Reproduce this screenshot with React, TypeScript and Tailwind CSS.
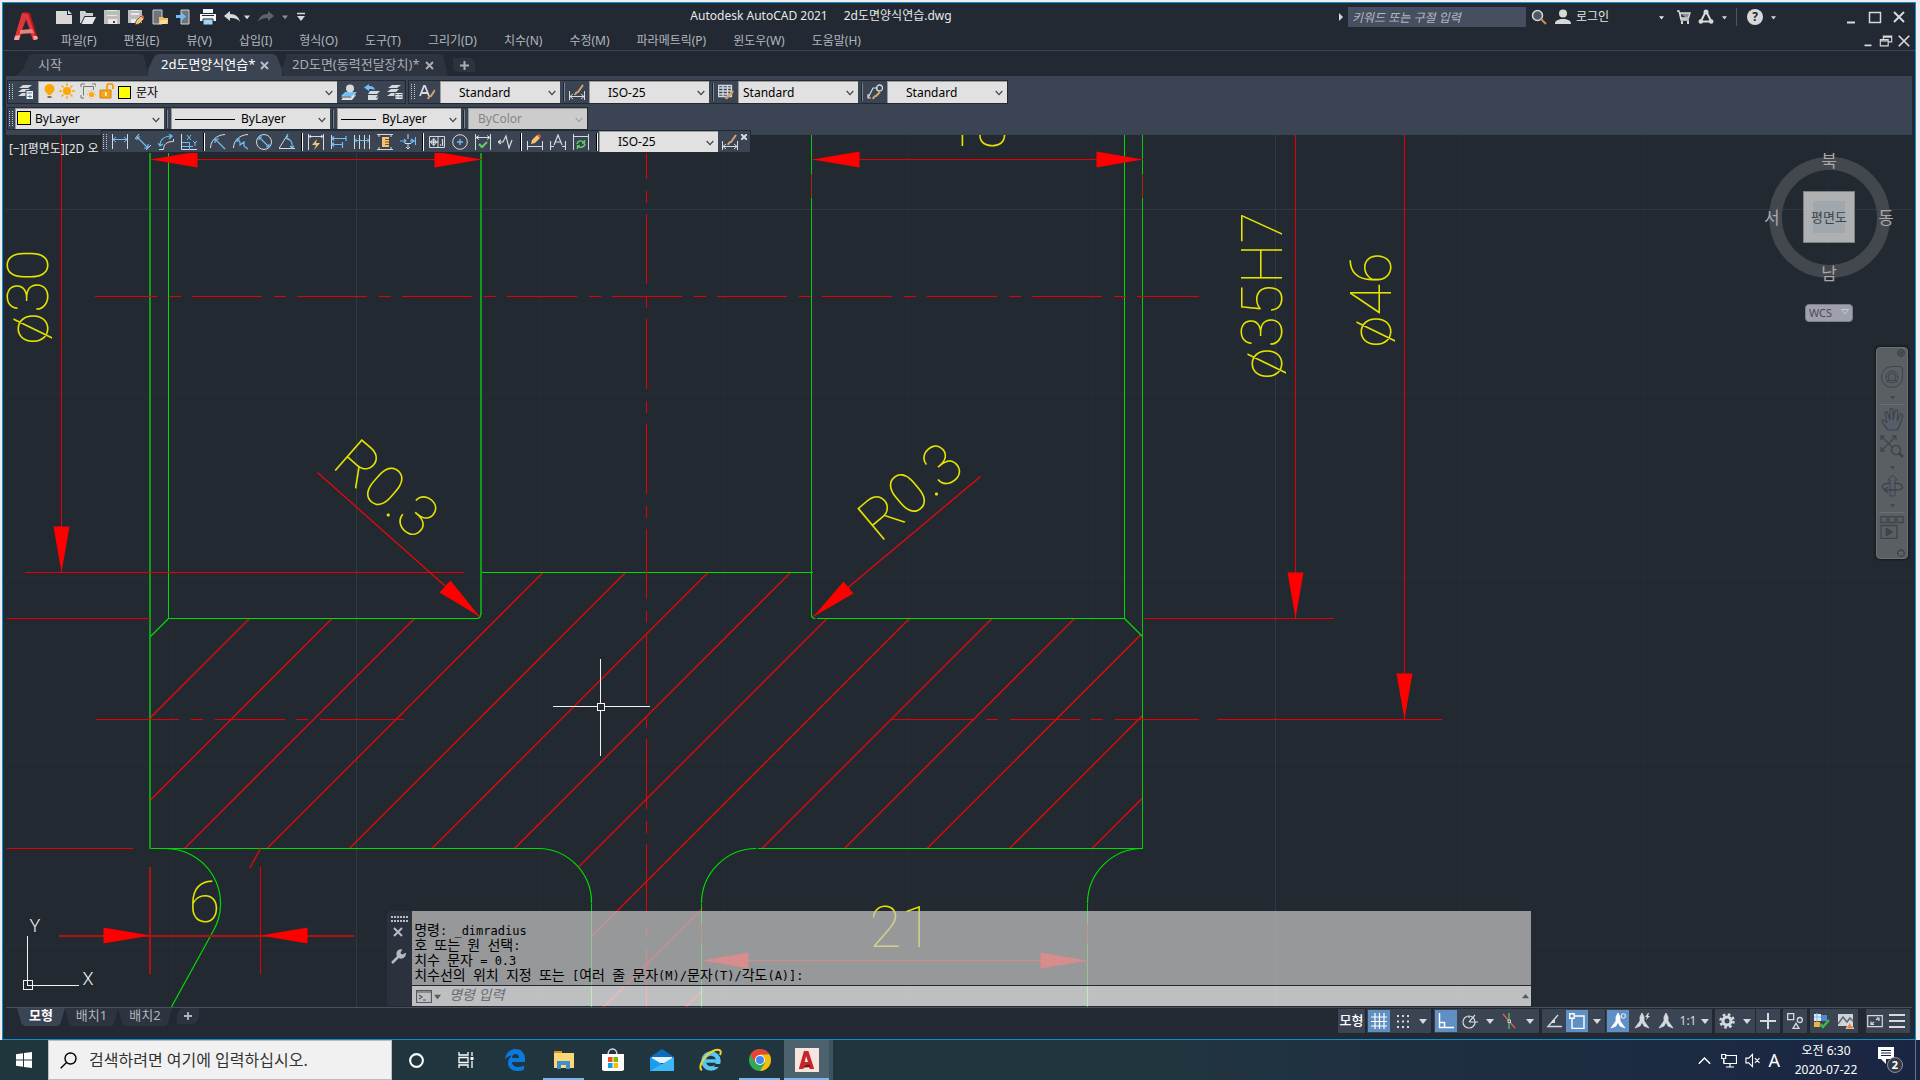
import type { ReactNode } from "react";

type IconProps = { children: ReactNode; className?: string; box?: string };

function Icon({ children, className = "size-4", box = "0 0 16 16" }: IconProps) {
  return (
    <svg viewBox={box} className={`${className} shrink-0`} fill="none" stroke="currentColor" aria-hidden="true">
      {children}
    </svg>
  );
}

const BLUE = "#6cc0f5";
const PALE = "#d6d9de";

/* ---------- shared small parts ---------- */

function Caret({ className = "size-2" }: { className?: string }) {
  return (
    <Icon className={className} box="0 0 8 8">
      <path d="M0 2h8L4 7z" fill="currentColor" stroke="none" />
    </Icon>
  );
}

function Grip() {
  return (
    <Icon className="h-4 w-1" box="0 0 4 16">
      <path d="M.5 0v16M3.5 0v16" stroke="#c5cad3" strokeDasharray="1 1" />
    </Icon>
  );
}

function Rule() {
  return <span className="h-[18px] w-[2px] shrink-0 border-l border-[#20262f] bg-[#7b8493]" />;
}

function HardRule() {
  return <span className="h-[18px] w-[2px] shrink-0 border-l border-black bg-white" />;
}

function Tool({ label, children }: { label: string; children: ReactNode }) {
  return (
    <button type="button" aria-label={label} title={label} className="shrink-0">
      <Icon>{children}</Icon>
    </button>
  );
}

type ComboProps = { label: string; value: string; width: string; pad: string; off?: boolean; children?: ReactNode };

function Combo({ label, value, width, pad, off = false, children }: ComboProps) {
  return (
    <div className={`relative h-full shrink-0 ${width}`}>
      <select
        aria-label={label}
        disabled={off}
        className={`block h-full w-full appearance-none border-l border-t border-[#9b9b9b] text-xs opacity-100 ${pad} ${
          off ? "bg-[#cccccc] text-[#858585]" : "bg-[#e1e1e1] text-black"
        }`}
      >
        <option>{value}</option>
      </select>
      {children}
      <Icon className={`absolute right-1 top-2 size-2 ${off ? "text-[#a5a5a5]" : "text-[#444]"}`} box="0 0 8 8">
        <path d="M.7 2 4 5.6 7.3 2" strokeWidth="1.2" />
      </Icon>
    </div>
  );
}

/* ---------- title and menu ---------- */

function QuickAccess() {
  return (
    <div className="flex items-center gap-2 pl-[18px] text-[#d8d8d8]">
      <Tool label="새로 만들기">
        <path d="M0 2h10l1 0v4h5v9H0z M12 1l4 4h-4z" fill="#d8d8d8" stroke="none" />
      </Tool>
      <Tool label="열기">
        <path d="M0 14V2h5l1.5 2H13v3H4.500L1 14z" fill="#cfcfcf" stroke="none" />
        <path d="M5 8h11l-3.500 7H1.500z" fill="#e6e6e6" stroke="none" />
      </Tool>
      <Tool label="저장">
        <path d="M0 1h16v14H0z" fill="#bdbdbd" stroke="none" />
        <path d="M3 1h10v6H3zM4 10h9v5H4z" fill="#e8e8e8" stroke="none" />
        <path d="M3 3h10M3 5h10" stroke="#8d8d8d" />
        <path d="M9 12h2v2H9z" fill="#444" stroke="none" />
      </Tool>
      <Tool label="다른 이름으로 저장">
        <path d="M0 1h14v13H0z" fill="#bdbdbd" stroke="none" />
        <path d="M3 1h8v5H3zM3 10h5v4H3z" fill="#e8e8e8" stroke="none" />
        <path d="M3 3h8" stroke="#8d8d8d" />
        <path d="M8 12l5-5 3 3-5 5-4 1z" fill="#f5c56b" stroke="#222933" strokeWidth=".6" />
        <path d="M13 7l1.500-1L16 8v2z" fill="#e46a5e" stroke="none" />
      </Tool>
      <Tool label="웹 및 모바일에서 열기">
        <path d="M1 1h9v14H1z" fill="#6f747c" stroke="#cfcfcf" />
        <path d="M7 8h4l1 1h4v6H7z" fill="#f0c067" stroke="none" />
        <path d="M9 11h7l-2 4H7z" fill="#ffdf9a" stroke="none" />
      </Tool>
      <Tool label="웹 및 모바일에 저장">
        <path d="M5 1h8v14H5z" fill="#6f747c" stroke="#cfcfcf" />
        <path d="M0 6h5V3l5 4.500L5 12V9H0z" fill={BLUE} stroke="none" />
      </Tool>
      <Tool label="플롯">
        <path d="M3 0h10v4H3zM0 5h16v7H0z" fill="#f4f4f4" stroke="none" />
        <path d="M3 10h10v6H3z" fill="#9ed3fa" stroke="#222933" />
        <path d="M2 6.500h12" stroke="#222933" />
      </Tool>
      <Tool label="명령 취소">
        <path d="M0 7l6-5v3c6 0 9 3 10 8-2-3-5-4-10-4v3z" fill="#d8d8d8" stroke="none" />
      </Tool>
      <Caret className="-ml-1 size-[6px]" />
      <span className="flex text-[#5d636c]">
        <Icon>
          <path d="M16 7l-6-5v3C4 5 1 8 0 13c2-3 5-4 10-4v3z" fill="currentColor" stroke="none" />
        </Icon>
      </span>
      <Caret className="size-[6px] text-[#8b9098]" />
      <Icon className="size-[10px]" box="0 0 10 10">
        <path d="M1 1.500h8" strokeWidth="1.500" />
        <path d="M1 4h8L5 9z" fill="currentColor" stroke="none" />
      </Icon>
    </div>
  );
}

function AutodeskLogo({ className }: { className: string }) {
  return (
    <Icon className={className} box="0 0 24 28">
      <path d="M0 28 8 1l3-1 5 1 8 26-5 1-3-7H8l-3 7z" fill="#b3191e" stroke="none" />
      <path d="M8 1l6 1 9 26h-4L12 7 5 28H0z" fill="#e0353a" stroke="none" />
      <path d="M12 8l4 10H8z" fill="#222933" stroke="none" />
      <path d="M6 18l12-1 2 4-14 1z" fill="#e8807c" stroke="none" />
      <path d="M1 24l5-1-1 5H0zM19 24l4 0 1 3-4 1z" fill="#f0a8a2" stroke="none" />
    </Icon>
  );
}

const MENUS = [
  "파일(F)", "편집(E)", "뷰(V)", "삽입(I)", "형식(O)", "도구(T)", "그리기(D)",
  "치수(N)", "수정(M)", "파라메트릭(P)", "윈도우(W)", "도움말(H)",
];

function Header() {
  return (
    <header className="relative flex h-12 shrink-0 border-b border-[#3d4655]">
      <button type="button" aria-label="응용프로그램 메뉴" className="ml-[11px] mt-[9px] self-start">
        <AutodeskLogo className="h-7 w-6" />
      </button>
      <div className="flex min-w-0 flex-1 flex-col">
        <div className="flex h-7 items-center">
          <QuickAccess />
          <div className="ml-auto flex items-center pr-2 text-[#d8d8d8]">
            <Icon className="size-2" box="0 0 8 8">
              <path d="M3 0v8l4-4z" fill="currentColor" stroke="none" />
            </Icon>
            <input
              aria-label="검색"
              placeholder="키워드 또는 구절 입력"
              className="ml-1 h-5 w-[178px] bg-[#464f60] px-1 text-xs italic placeholder:text-[#b4bac4]"
            />
            <button type="button" aria-label="찾기" className="ml-[5px]">
              <Icon>
                <circle cx="6.500" cy="6.500" r="5" fill="#4d5b66" strokeWidth="1.500" />
                <path d="M10 10l5 5" stroke="#c98e55" strokeWidth="2" />
              </Icon>
            </button>
            <button type="button" className="ml-2 flex items-center gap-[5px] text-xs text-[#e6e6e6]">
              <Icon>
                <circle cx="8" cy="4.500" r="4" fill="#d8d8d8" stroke="none" />
                <path d="M0 15c0-4 3-4 6-5h4c3 1 6 1 6 5z" fill="#d8d8d8" stroke="none" />
              </Icon>
              <span className="w-[78px] text-left">로그인</span>
              <Caret className="size-[5px]" />
            </button>
            <button type="button" aria-label="앱 스토어" className="ml-3">
              <Icon>
                <path d="M1 2h2l2 9h8M4 4h10l-1.500 5H5z" strokeWidth="1.300" fill="#8b9098" />
                <path d="M5 12h2v3H5zM11 12h2v3h-2z" fill="currentColor" stroke="none" />
              </Icon>
            </button>
            <button type="button" aria-label="Autodesk" className="ml-[6px] flex items-center gap-2">
              <Icon>
                <path d="M7.500 3 2.500 13M8.500 3l5 10M2 12.500h12" strokeWidth="2" />
                <circle cx="8" cy="3" r="2.500" fill="currentColor" stroke="none" />
                <circle cx="2.800" cy="12.500" r="2.300" fill="currentColor" stroke="none" />
                <circle cx="13.200" cy="12.500" r="2.300" fill="currentColor" stroke="none" />
              </Icon>
              <Caret className="size-[5px]" />
            </button>
            <span className="ml-[9px] h-[18px] w-px bg-[#4c5667]" />
            <button type="button" aria-label="도움말" className="ml-[10px] flex items-center gap-2">
              <span className="flex size-4 items-center justify-center rounded-full bg-[#d8d8d8] text-xs font-bold text-[#222933]">?</span>
              <Caret className="size-[5px]" />
            </button>
            <button type="button" aria-label="최소화" className="ml-[67px]">
              <Icon><path d="M4 13.500h8" strokeWidth="2" /></Icon>
            </button>
            <button type="button" aria-label="최대화" className="ml-2">
              <Icon><path d="M2.500 3.500h11v10h-11z" strokeWidth="1.500" /></Icon>
            </button>
            <button type="button" aria-label="닫기" className="ml-2">
              <Icon><path d="M3 3l10 10M13 3 3 13" strokeWidth="2" /></Icon>
            </button>
          </div>
        </div>
        <div className="flex h-[19px] items-center">
          <nav className="flex gap-[27px] pl-[23px] text-xs text-[#b2b6bd]">
            {MENUS.map((m) => (
              <button key={m} type="button" className="whitespace-nowrap">{m}</button>
            ))}
          </nav>
          <div className="ml-auto flex items-center gap-1 pr-1 text-[#d8d8d8]">
            <button type="button" aria-label="도면 최소화">
              <Icon className="size-[14px]"><path d="M4 13h8" strokeWidth="2" /></Icon>
            </button>
            <button type="button" aria-label="도면 복원">
              <Icon className="size-[14px]">
                <path d="M5 6V2.500h9.500V9H11M1.500 6.500h9v7h-9zM5 3.500h9M2 8h8" strokeWidth="1.300" />
              </Icon>
            </button>
            <button type="button" aria-label="도면 닫기">
              <Icon className="size-[14px]"><path d="M2 2l12 12M14 2 2 14" strokeWidth="2" /></Icon>
            </button>
          </div>
        </div>
      </div>
      <h1 className="pointer-events-none absolute inset-x-0 top-1 flex justify-center gap-4 pr-[276px] text-xs leading-[18px] text-[#e8e8e8]">
        <span>Autodesk AutoCAD 2021</span>
        <span>2d도면양식연습.dwg</span>
      </h1>
    </header>
  );
}

function FileTabs() {
  return (
    <div className="flex h-[25px] shrink-0 items-end bg-[#222933] pl-[10px] text-[13px] text-[#a9aeb6]">
      <button type="button" className="h-[22px] w-[132px] bg-[#2d3440] pl-[22px] text-left [clip-path:polygon(0_100%,5%_70%,10%_8%,13%_0,94%_0,97%_8%,100%_100%)]">
        시작
      </button>
      <div className="flex h-[22px] w-[134px] items-center justify-between bg-[#3b4453] pl-[13px] pr-[13px] text-white [clip-path:polygon(0_70%,5%_8%,8%_0,93%_0,96%_8%,100%_70%,100%_100%,0_100%)]">
        <button type="button" className="whitespace-nowrap">2d도면양식연습*</button>
        <button type="button" aria-label="2d도면양식연습 닫기" className="text-[#b9bdc4]">
          <Icon className="size-[9px]" box="0 0 9 9"><path d="M1 1l7 7M8 1 1 8" strokeWidth="2" /></Icon>
        </button>
      </div>
      <div className="flex h-[22px] w-[166px] items-center justify-between bg-[#2d3440] pl-[10px] pr-[14px] [clip-path:polygon(0_70%,3%_0,94%_0,97%_8%,100%_100%,1%_100%)]">
        <button type="button" className="whitespace-nowrap">2D도면(동력전달장치)*</button>
        <button type="button" aria-label="2D도면 닫기">
          <Icon className="size-[9px]" box="0 0 9 9"><path d="M1 1l7 7M8 1 1 8" strokeWidth="2" /></Icon>
        </button>
      </div>
      <button type="button" aria-label="새 도면" className="mb-1 ml-[5px] flex h-[14px] w-[22px] items-center justify-center rounded-bl-md rounded-tr-md bg-[#2d3440]">
        <Icon className="size-[9px]" box="0 0 9 9"><path d="M4.500 0v9M0 4.500h9" strokeWidth="2" /></Icon>
      </button>
    </div>
  );
}

/* ---------- toolbars ---------- */

function Layers() {
  return (
    <g stroke="none" fill={PALE}>
      <path d="M5 1h9l-4 3H1zM4 5h8l-3 3H0zM4 9h6l-3 3H0z" />
    </g>
  );
}

function StyleBars() {
  return (
    <div className="flex shrink-0 flex-col gap-[3px] bg-[#3b4453] pb-[5px] pl-px pt-1 text-[#d6d9de]">
      <div className="flex h-6 gap-[2px]">
        <div className="flex items-center border border-[#222933] pl-px">
          <Grip />
          <span className="ml-[5px] mr-1 flex">
            <Tool label="도면층 특성">
              <Layers />
              <path d="M8 6.500h7.500v9H8z" fill="#f2f2f2" stroke="#3b4453" />
              <path d="M9.500 9h4.500M9.500 12.500h4.500M12 11v3" stroke="#3f87c0" />
            </Tool>
          </span>
          <Combo label="도면층" value="문자" width="w-[299px]" pad="pl-[97px]">
            <span className="pointer-events-none absolute left-1 top-[2px] flex gap-px">
              <Icon>
                <circle cx="7.500" cy="6" r="5" fill="#ffa600" stroke="none" />
                <path d="M5.500 10h4v2h-4z" fill="#ffa600" stroke="none" />
                <path d="M5.500 13h4v2h-4z" fill="#777" stroke="none" />
              </Icon>
              <Icon>
                <circle cx="8" cy="8" r="4" fill="#ffa600" stroke="none" />
                <path d="M8 0v3M8 13v3M0 8h3M13 8h3M2.500 2.500l2 2M11.500 11.500l2 2M13.500 2.500l-2 2M4.500 11.500l-2 2" stroke="#ffa600" strokeWidth="1.300" />
              </Icon>
              <Icon className="ml-1 size-4">
                <path d="M3.500 12.500v-9h10V7M1 4V1h4M12 1h4v3M1 12v3h3" stroke="#777" />
                <circle cx="11.500" cy="11.500" r="2.500" fill="#ffa600" stroke="none" />
                <path d="M11.500 7v9M7 11.500h9M8.500 8.500l6 6M14.500 8.500l-6 6" stroke="#ffa600" strokeDasharray="1 1" />
              </Icon>
              <Icon className="ml-[2px] size-4">
                <path d="M1 7h11v8H1z" fill="#f6a21a" stroke="#d88400" />
                <path d="M8 7V3c0-3 6-3 6 0v3" stroke="#f6a21a" strokeWidth="2" />
                <path d="M6 9h1.500v4H6z" fill="#fff" stroke="none" />
              </Icon>
              <span className="ml-[2px] mt-[3px] size-[13px] border border-black bg-[#ffff00]" />
            </span>
          </Combo>
          <span className="ml-1 flex gap-[7px] pr-[2px]">
            <Tool label="객체의 도면층을 현재로">
              <path d="M4 8h12l-4 4H0z" fill={BLUE} stroke="none" />
              <path d="M3 10.500h1l-3 2h9l4-3h1l-4 4H0zM3 13h1l-3 1h9l4-3h1l-4 5H0z" fill="#e2e2e2" stroke="none" />
              <circle cx="9" cy="4.500" r="4" fill="#d5d8dc" stroke="none" />
            </Tool>
            <Tool label="이전 도면층">
              <path d="M6 7h10l-3 3H4zM4 11h10l1-2-3 5H4zM4 14h9l2-2-2 4H4z" fill={PALE} stroke="none" />
              <path d="M0 3.500 5 0v2c4 0 5 1 6 4-2-1-3-1-6-1v2z" fill={BLUE} stroke="none" />
            </Tool>
            <Tool label="도면층 상태">
              <Layers />
              <path d="M8 8.500h8v7H8z" fill="#eee" stroke="#3b4453" />
              <path d="M9 10.500h1.500M11.500 10.500H15M9 13h1.500M11.500 13H15" stroke="#555" />
            </Tool>
          </span>
        </div>
        <div className="flex items-center border border-[#222933] pl-[2px]">
          <Grip />
          <span className="ml-1 mr-[5px] flex">
            <Tool label="문자 스타일">
              <path d="M1 12 5 2h1l4 10M2.500 9h6" strokeWidth="1.800" />
              <path d="M9 15c1-3 3-3 3-3l4-6" stroke="#d2a470" strokeWidth="2" />
            </Tool>
          </span>
          <Combo label="문자 스타일 목록" value="Standard" width="w-[120px]" pad="pl-[18px]" />
          <span className="ml-[3px] mr-1 flex"><Rule /></span>
          <span className="mr-1 flex">
            <Tool label="치수 스타일">
              <path d="M.5 7v9M15.500 7v9M1 12.500h14M4 10l-3 2.500L4 15M12 10l3 2.500-3 2.500" />
              <path d="M6 11c1-3 3-3 3-3l5-7" stroke="#d2a470" strokeWidth="2" />
            </Tool>
          </span>
          <Combo label="치수 스타일 목록" value="ISO-25" width="w-[120px]" pad="pl-[18px]" />
          <span className="ml-[3px] mr-1 flex"><Rule /></span>
          <span className="mr-1 flex">
            <Tool label="테이블 스타일">
              <path d="M.5 1.500h13v11H.5zM.5 4h13M.5 7h13M.5 10h13M5 2v10M9.500 2v10" strokeWidth="1.300" />
              <path d="M8 15c1-3 3-3 3-3l4-5" stroke="#d2a470" strokeWidth="2.500" />
            </Tool>
          </span>
          <Combo label="테이블 스타일 목록" value="Standard" width="w-[120px]" pad="pl-1" />
          <span className="ml-[3px] mr-1 flex"><Rule /></span>
          <span className="mr-1 flex">
            <Tool label="다중 지시선 스타일">
              <path d="M1 14 6 4h5M1 10v4h3" strokeWidth="1.200" />
              <circle cx="12.500" cy="4" r="3" strokeWidth="1.300" />
              <path d="M6 15c1-3 3-3 3-3l4-4" stroke="#d2a470" strokeWidth="2" />
            </Tool>
          </span>
          <Combo label="다중 지시선 목록" value="Standard" width="w-[120px]" pad="pl-[18px]" />
        </div>
      </div>
      <div className="flex h-[23px]">
        <div className="flex items-center border border-[#222933] pl-px">
          <Grip />
          <span className="w-[2px]" />
          <Combo label="색상" value="ByLayer" width="w-[149px]" pad="pl-[19px]">
            <span className="pointer-events-none absolute left-[2px] top-[3px] size-[14px] border border-black bg-[#ffff00]" />
          </Combo>
          <span className="ml-[2px] mr-[3px] flex"><Rule /></span>
          <Combo label="선종류" value="ByLayer" width="w-[159px]" pad="pl-[69px]">
            <span className="pointer-events-none absolute left-1 top-[11px] h-px w-[60px] bg-black" />
          </Combo>
          <span className="ml-[2px] mr-[3px] flex"><Rule /></span>
          <Combo label="선가중치" value="ByLayer" width="w-[124px]" pad="pl-11">
            <span className="pointer-events-none absolute left-1 top-[11px] h-px w-[35px] bg-black" />
          </Combo>
          <span className="ml-[2px] mr-[3px] flex"><Rule /></span>
          <Combo label="플롯 스타일" value="ByColor" width="w-[119px]" pad="pl-[9px]" off />
        </div>
      </div>
    </div>
  );
}

function DimensionBar() {
  return (
    <div className="absolute -top-[5px] left-[95px] z-10 flex h-[23px] items-center border border-[#222933] bg-[#3b4453] text-[#d6d9de]">
      <span className="ml-px mr-[5px] flex"><Grip /></span>
      <div className="flex gap-[7px]">
        <Tool label="선형">
          <path d="M.5 0v15M15.500 0v15" /><path d="M1 5.500h14M4 3 1 5.500 4 8M12 3l3 2.500L12 8" stroke={BLUE} />
        </Tool>
        <Tool label="정렬">
          <path d="M0 5l4-5M11 16l5-5" /><path d="M2 3l11 11M2 6V3h3M13 10v4H9" stroke={BLUE} strokeWidth="1.200" />
        </Tool>
        <Tool label="호 길이">
          <path d="M1 15.500h4.500c0-5 3-8 10-8V5" /><path d="M2 12c0-6 4-10 12-10M0 9l2 3 3-2M11 0l3 2-3 3" stroke={BLUE} strokeWidth="1.200" />
        </Tool>
        <Tool label="세로좌표">
          <path d="M.5 0v15.500H16" /><path d="M6 1l4 5M10 1 6 6M12 7l2 2 2-2M14 9v3M1 8.500h7.500V16M1 12.500h11" stroke={BLUE} />
        </Tool>
      </div>
      <span className="ml-[6px] mr-[5px] flex"><HardRule /></span>
      <div className="flex gap-[7px]">
        <Tool label="반지름">
          <path d="M.5 14C.5 7 6 1 15 .5" /><path d="M15 15 5 5M5 9V5h4" stroke={BLUE} strokeWidth="1.200" />
        </Tool>
        <Tool label="꺾기">
          <path d="M.5 14C.5 7 6 1 15 .5" /><path d="M4 5l3 3 0 3 4-3v4l4 3M4 8V5h3" stroke={BLUE} strokeWidth="1.200" />
        </Tool>
        <Tool label="지름">
          <circle cx="8" cy="8" r="7.500" /><path d="M3 3l10 10M3 6V3h3M13 10v3h-3" stroke={BLUE} strokeWidth="1.200" />
        </Tool>
        <Tool label="각도">
          <path d="M9 0 0 14.500h16" /><path d="M7 4c5 1 7 5 6 10M9 2 7 4l3 2M11 12l2 2 2-2" stroke={BLUE} strokeWidth="1.200" />
        </Tool>
      </div>
      <span className="ml-[6px] mr-[5px] flex"><HardRule /></span>
      <div className="flex gap-[7px]">
        <Tool label="신속 치수">
          <path d="M.5 0v16M15.500 0v16M1 2.500h14M3 1 1 2.500 3 4M13 1l2 1.500L13 4" /><path d="M9 5l-5 6h4l-2 5 6-7H8z" fill="#f7c46c" stroke="none" />
        </Tool>
        <Tool label="기준선">
          <path d="M.5 1v14" /><path d="M1 4.500h14M1 10.500h10M15 2v5M11.500 8v6M3 2.500l-2 2 2 2M3 8.500l-2 2 2 2" stroke={BLUE} strokeWidth="1.200" />
        </Tool>
        <Tool label="계속">
          <path d="M.5 1v14M5.500 1v14M10.500 1v14M15.500 1v14" /><path d="M1 6.500h14M3 4.500l-2 2 2 2M13 4.500l2 2-2 2" stroke={BLUE} />
        </Tool>
        <Tool label="치수 공간">
          <path d="M0 15.500h16M0 .500h16M2 0v3M14 0v3M2 13v3M14 13v3" /><path d="M5 3h7v10H5z" fill="#f7c46c" stroke="none" /><path d="M8 5.500h4M8 8h4M8 10.500h4" stroke="#77571e" />
        </Tool>
        <Tool label="치수 끊기">
          <path d="M8 0v5M8 9v6M6 13l2 2 2-2M5 9.500h6" /><path d="M0 7h6M10 7h6M4 5l2 2-2 2M15.500 3v8M11 5l3 2-3 2" stroke={BLUE} strokeWidth="1.200" />
        </Tool>
      </div>
      <span className="ml-[6px] mr-[5px] flex"><HardRule /></span>
      <div className="flex gap-[7px]">
        <Tool label="공차">
          <path d="M.5 2.500h15v11H.5zM9 3v10" /><circle cx="4.700" cy="8" r="2.500" /><path d="M4.700 4v8M1 8h8M11 11h1M13.500 5v7" strokeWidth="1.300" />
        </Tool>
        <Tool label="중심 표식">
          <circle cx="8" cy="8" r="7.300" /><path d="M8 5v6M5 8h6" stroke={BLUE} strokeWidth="1.300" />
        </Tool>
        <Tool label="검사">
          <path d="M.5 0v16M15.500 0v16M1 3.500h14M4 1.500l-3 2 3 2M12 1.500l3 2-3 2" /><path d="M4 10l3 3 5-5" stroke="#5fd068" strokeWidth="2" />
        </Tool>
        <Tool label="꺾어진 선형">
          <path d="M0 8h5l3-6 3 12 3-8M3 6 0 8l3 2" strokeWidth="1.200" />
        </Tool>
      </div>
      <span className="ml-[6px] mr-[5px] flex"><HardRule /></span>
      <div className="flex gap-[7px]">
        <Tool label="치수 편집">
          <path d="M.5 7v9M15.500 7v9M1 12.500h14" /><path d="M4 10l1-4 5-5 3 3-5 5z" fill="#f7c46c" stroke="none" /><path d="M10 1l2-1 2 2-1 2z" fill="#ef5350" stroke="none" />
        </Tool>
        <Tool label="치수 문자 편집">
          <path d="M.5 7v9M15.500 7v9M1 12.500h3M12 12.500h3M4 11 8 1l4 10M5.500 8h5" strokeWidth="1.200" />
        </Tool>
        <Tool label="치수 업데이트">
          <path d="M.5 0v16M15.500 0v16M1 2.500h14" /><path d="M4 10c1-4 6-4 7-1M12 10c-1 4-6 4-7 2M11.500 6v3H9M4.500 15v-3H7" stroke="#5fd068" strokeWidth="1.400" />
        </Tool>
      </div>
      <span className="ml-[7px] mr-px flex"><HardRule /></span>
      <Combo label="현재 치수 스타일" value="ISO-25" width="w-[119px]" pad="pl-[18px]" />
      <span className="ml-1 flex">
        <Tool label="치수 스타일 관리자">
          <path d="M.5 7v9M15.500 7v9M1 12.500h14M4 10l-3 2.500L4 15M12 10l3 2.500-3 2.500" />
          <path d="M6 11c1-3 3-3 3-3l5-7" stroke="#d2a470" strokeWidth="2" />
        </Tool>
      </span>
      <button type="button" aria-label="도구막대 닫기" className="mx-[3px] mt-[3px] self-start">
        <Icon className="size-[6px]" box="0 0 6 6"><path d="M0 0l6 6M6 0 0 6" strokeWidth="2" /></Icon>
      </button>
    </div>
  );
}

/* ---------- drawing ---------- */

const HATCH = Array.from({ length: 14 }, (_, k) => 867 + k * 82.5);
const GRID_X = [172, 540, 724, 908, 1092, 1460, 1643, 1827];
const GRID_Y = [393, 577, 761, 945];
const DIM_TEXT = "font-['Roboto'] text-[58px] font-thin";

function Drawing() {
  return (
    <svg className="absolute inset-0 h-full w-full" fill="none" role="img" aria-label="2D 도면">
      <defs>
        <clipPath id="section">
          <path d="M150 848V636L168 618H477L481 614V572H812V614L816 618H1124L1142 636V848H757A54 54 0 0 0 702 903V1010H592V903A54 54 0 0 0 540 848Z" />
        </clipPath>
      </defs>
      <g transform="translate(-5.5 -134.5)">
        <g stroke="#262d37" shapeRendering="crispEdges">
          {GRID_X.map((x) => <path key={x} d={`M${x} 130V1010`} />)}
          {GRID_Y.map((y) => <path key={y} d={`M0 ${y}H1915`} />)}
          <path d="M356 130V1010M1275 130V1010M0 209H1915" stroke="#303745" />
        </g>

        <g clipPath="url(#section)" stroke="#e80808" strokeWidth="1.300">
          {HATCH.map((c) => <path key={c} d={`M${c - 1010} 1010L${c - 560} 560`} />)}
        </g>

        <g stroke="#00dc00" shapeRendering="crispEdges">
          <path d="M168 130V618H477M480 572H812M816 618H1124V130M150 848H540M757 848H1142" />
          <path d="M149.5 130V848M480.5 130V614" stroke="#129a1b" strokeWidth="2" />
          <path d="M811 130V614M1142 130V848M591 903V1010M701 903V1010M1087 903V1010" stroke="#08c810" />
        </g>
        <g stroke="#00dc00" strokeWidth="1.200">
          <path d="M150 636 168 618M1124 618l18 18M476 618q4 0 4-4M811 614q0 4 4 4" />
          <path d="M540 848A54 54 0 0 1 591 903M756 848A55 55 0 0 0 701 903M1142 848A55 55 0 0 0 1087 903" />
          <path d="M165 848A55 55 0 0 1 213 930L169 1010" />
        </g>

        <g stroke="#e80000" shapeRendering="crispEdges">
          <path d="M94 296H1198" strokeDasharray="70 12 12 11" strokeDashoffset="8" />
          <path d="M646 135V1010" strokeDasharray="70 12 12 11" strokeDashoffset="27" />
          <path d="M95 719H178M190 719H202M214 719H284M295 719H307M319 719H403" />
          <path d="M890 719H974M985 719H997M1009 719H1079M1090 719H1102M1114 719H1198M1216 719H1441" />
          <path d="M6 848H132M6 618H149M24 572H463M1143 618H1333" />
          <path d="M61 130V572M1295 130V618M1404 130V719" />
          <path d="M150 159H481M812 159H1142M702 960H1088M260 866V973" />
          <path d="M58 935.5H353M149.5 866V973" stroke="#b01212" strokeWidth="2" />
          <path d="M811 173V197M1142 173V197M701 923V942M1087 923V942" stroke="#a02a10" />
        </g>
        <path d="M260 848 249 868M317 472 479 616M980 476 813 616" stroke="#e80808" strokeWidth="1.300" />
        <g fill="#ff0000">
          <path d="M150 159l47-8v16zM481 159l-47-8v16zM812 159l47-8v16zM1142 159l-46-8v16z" />
          <path d="M61 572l-8-46h16zM1295 618l-8-46h16zM1404 719l-8-46h16z" />
          <path d="M150 935l-47-8v16zM260 935l47-8v16zM702 960l46-8v16zM1087 960l-47-8v16z" />
          <path d="M479 616 439 592 450 580zM813 616 843 581 853 593z" />
        </g>

        <g fill="#e4e400" className={DIM_TEXT}>
          <text transform="translate(47 344) rotate(-90)">ø30</text>
          <text transform="translate(1281 379) rotate(-90)">ø35H7</text>
          <text transform="translate(1390 347) rotate(-90)">ø46</text>
          <text transform="translate(330 466) rotate(41)">R0.3</text>
          <text transform="translate(879 543) rotate(-40)">R0.3</text>
          <text x="188" y="921">6</text>
          <text x="869" y="946">21</text>
          <text x="944" y="145">18</text>
        </g>

        <g stroke="#f2f2f2" shapeRendering="crispEdges">
          <path d="M600 658V703M600 710V755M552 706H597M604 706H649M597 703h7v7h-7z" />
          <path d="M23 980h9v9h-9zM27 935V985H78" />
        </g>
        <g fill="#f2f2f2" className="font-['Roboto'] text-lg font-light">
          <text x="29" y="931">Y</text>
          <text x="82" y="984">X</text>
        </g>
      </g>
    </svg>
  );
}

function ViewCube() {
  return (
    <div className="absolute right-[21px] top-[13px] flex w-[124px] flex-col items-center text-[17px] leading-none text-[#a9a9a9]">
      <div className="relative flex size-[138px] items-center justify-center">
        <span className="absolute size-[121px] rounded-full border-[13px] border-[#43484f]" />
        <button type="button" className="absolute top-1">북</button>
        <button type="button" className="absolute bottom-1">남</button>
        <button type="button" className="absolute left-1">서</button>
        <button type="button" className="absolute right-1">동</button>
        <button type="button" className="relative flex size-[52px] items-center justify-center border border-[#7d7f80] bg-[#aeb0b2] text-[13px] text-[#3d444b]">
          <span className="absolute size-8 bg-[#a0a7ad]" />
          <span className="relative whitespace-nowrap">평면도</span>
        </button>
      </div>
      <button type="button" className="mt-[18px] flex h-[18px] w-12 items-center justify-between rounded border border-[#7c7e8c] bg-[#9fa0ae] px-[3px] pb-[2px] text-[11px] text-[#4a4c58]">
        WCS
        <Icon className="h-[6px] w-2" box="0 0 8 6"><path d="M.5.500h7L4 5z" stroke="#c8c9d4" /></Icon>
      </button>
    </div>
  );
}

function NavBar() {
  return (
    <div className="absolute right-1 top-[212px] flex h-[212px] w-8 flex-col items-center rounded border border-[#6b7073] bg-[#5a5f63] text-[#3f444b] shadow-[0_0_2px_1px_#14191f]">
      <button type="button" aria-label="탐색 막대 닫기" className="mr-[2px] mt-px self-end">
        <Icon className="size-2" box="0 0 8 8"><circle cx="4" cy="4" r="3.500" fill="#4b5055" /><path d="M2.500 2.500l3 3M5.500 2.500l-3 3" /></Icon>
      </button>
      <button type="button" aria-label="전체 탐색 휠" className="mt-[9px]">
        <Icon className="size-[22px]" box="0 0 22 22">
          <path d="M11 .5h8a2.500 2.500 0 0 1 2.500 2.500v8A10.500 10.500 0 1 1 11 .5z" /><circle cx="11" cy="11" r="6" /><circle cx="11" cy="11" r="4" fill="#555b67" /><path d="M5 17l3-3M17 17l-3-3" />
        </Icon>
      </button>
      <Caret className="mt-[7px] size-[5px]" />
      <span className="mt-1 h-px w-[26px] bg-[#6b7073]" />
      <button type="button" aria-label="초점이동" className="mt-[3px]">
        <Icon className="h-6 w-[23px]" box="0 0 23 24">
          <path d="M7 22C4 18 1 15 1 13s2-2 5 2L4 5c0-2 2-2 3 1l2 6V2c0-2 3-2 3 0v10l2-9c1-2 3-1 3 1l-1 9 3-6c1-2 3-1 3 1-2 5-3 10-6 14z" fill="#585e69" strokeWidth="1.200" />
        </Icon>
      </button>
      <button type="button" aria-label="줌 범위" className="mt-[3px]">
        <Icon className="size-6" box="0 0 24 24">
          <path d="M1 1l15 15M16 1 1 16M1 5V1h4M12 1h4v4M1 12v4h4" strokeWidth="1.300" /><circle cx="16" cy="15" r="4.500" fill="#5a5f63" strokeWidth="1.500" /><path d="M19 18l4 4" strokeWidth="3" />
        </Icon>
      </button>
      <Caret className="mt-[6px] size-[5px]" />
      <button type="button" aria-label="궤도" className="mt-1">
        <Icon className="size-[23px]" box="0 0 23 23">
          <path d="M9 22V6H7l4.500-5L16 6h-2v16z" fill="#585e69" /><path d="M14 9c10 1 10 7 0 7H4M9 9c-9 1-9 4-6 6M7 13l-4 3 4 3" strokeWidth="1.400" />
        </Icon>
      </button>
      <Caret className="mt-[6px] size-[5px]" />
      <span className="mt-1 h-px w-[26px] bg-[#6b7073]" />
      <button type="button" aria-label="쇼모션" className="mt-[3px]">
        <Icon className="h-[23px] w-6" box="0 0 24 23">
          <path d="M1 .5h6v6H1zM9 .5h6v6H9zM17 .5h6v6h-6zM1 9.500h16v13H1z" strokeWidth="1.300" /><path d="M6 12v8l7-4z" fill="currentColor" />
        </Icon>
      </button>
      <button type="button" aria-label="탐색 막대 메뉴" className="mb-px mr-[2px] mt-auto self-end">
        <Icon className="size-2" box="0 0 8 8"><circle cx="4" cy="4" r="3.500" fill="#4b5055" /><path d="M2 3.500h4M2 5.500h4" stroke="#6b7073" /></Icon>
      </button>
    </div>
  );
}

/* Hangul runs are set one step larger than the monospaced Latin around them. */
function ConsoleLine({ text }: { text: string }) {
  return (
    <p className="h-[15px] whitespace-pre leading-[15px]">
      {text.split(/([가-힣]+)/).map((run, i) =>
        i % 2 ? <span key={i} className="text-sm leading-[15px]">{run}</span> : run
      )}
    </p>
  );
}

const HISTORY = ["명령: _dimradius", "호 또는 원 선택:", "치수 문자 = 0.3", "치수선의 위치 지정 또는 [여러 줄 문자(M)/문자(T)/각도(A)]:"];

function CommandWindow() {
  return (
    <section aria-label="명령행" className="absolute bottom-px left-[20%] right-[20%] flex h-[95px]">
      <div className="flex w-[25px] shrink-0 flex-col items-center rounded-tl bg-[#2b313d] pt-[5px] text-[#b9bcc2]">
        <Icon className="h-[6px] w-[17px]" box="0 0 17 6"><path d="M0 1h17M0 5h17" strokeWidth="2" strokeDasharray="2 1" /></Icon>
        <button type="button" aria-label="명령행 닫기" className="mr-[3px] mt-[5px]">
          <Icon className="size-[10px]" box="0 0 10 10"><path d="M1 1l8 8M9 1 1 9" strokeWidth="2" /></Icon>
        </button>
        <button type="button" aria-label="사용자화" className="mr-[3px] mt-3">
          <Icon>
            <path d="M2 14l7-7" strokeWidth="2.500" /><path d="M14.500 4.500a3.500 3.500 0 1 1-3-3L10.500 4 12 5.500z" fill="currentColor" stroke="none" /><path d="M12 1a4 4 0 1 0 3 3" strokeWidth="1.500" />
          </Icon>
        </button>
      </div>
      <div className="flex min-w-0 flex-1 flex-col">
        <div className="flex-1 border-b border-[#222933] bg-[#c7c7c7]/70 pl-[2px] pt-3 font-['DejaVu_Sans_Mono','Noto_Sans_CJK_KR',monospace] text-xs text-black">
          {HISTORY.map((line) => <ConsoleLine key={line} text={line} />)}
        </div>
        <div className="flex h-5 items-center bg-white/70 pl-1 pr-[2px] text-[#55585c]">
          <Icon className="h-[13px] w-4" box="0 0 16 13"><path d="M.5.500h15v12H.5zM1 2h14M3 5l3 2-3 2M7 10h3" strokeWidth="1.200" /></Icon>
          <Caret className="ml-[2px] size-[7px]" />
          <input aria-label="명령 입력" placeholder="명령 입력" className="ml-2 min-w-0 flex-1 bg-transparent pb-[3px] text-sm italic leading-none placeholder:text-[#696c70]" />
          <Icon className="size-[7px]" box="0 0 8 8"><path d="M0 6h8L4 1z" fill="currentColor" stroke="none" /></Icon>
        </div>
      </div>
    </section>
  );
}

/* ---------- layout tabs and status bar ---------- */

type StatProps = { label: string; width: string; on?: boolean; children: ReactNode };

function Stat({ label, width, on = false, children }: StatProps) {
  return (
    <button
      type="button"
      aria-label={label}
      title={label}
      className={`flex h-full items-center justify-center ${width} ${on ? "border border-[#3b4453] bg-[#5f8fc3] text-white" : ""}`}
    >
      {children}
    </button>
  );
}

function Group({ gap, children }: { gap: string; children: ReactNode }) {
  return <div className={`flex h-6 shrink-0 bg-[#3b4453] ${gap}`}>{children}</div>;
}

const PERSON = "M8 0 6 4v4L1 15l5-2 2-4 2 4 5 2-5-7V4z";

function StatusBar() {
  return (
    <footer className="flex h-8 shrink-0 items-start justify-between border-t border-[#4a525f] bg-[#222933] text-[13px]">
      <div className="flex h-[18px] pl-[11px] text-[#b2b6bd]">
        <button type="button" className="h-[18px] w-[48px] bg-[#3b4453] pb-[3px] font-bold leading-[15px] text-white [clip-path:polygon(0_0,100%_0,90%_90%,84%_100%,16%_100%,10%_90%)]">모형</button>
        <button type="button" className="h-[18px] w-[53px] bg-[#2d3440] pb-[3px] leading-[15px] [clip-path:polygon(0_0,100%_0,92%_90%,88%_100%,14%_100%,8%_90%)]">배치1</button>
        <button type="button" className="h-[18px] w-[54px] bg-[#2d3440] pb-[3px] leading-[15px] [clip-path:polygon(0_0,100%_0,92%_90%,88%_100%,14%_100%,8%_90%)]">배치2</button>
        <button type="button" aria-label="새 배치" className="ml-[5px] flex h-4 w-[22px] items-center justify-center rounded-br-lg rounded-tl-lg bg-[#2d3440]">
          <Icon className="size-2" box="0 0 8 8"><path d="M4 0v8M0 4h8" strokeWidth="1.800" /></Icon>
        </button>
      </div>
      <div className="flex pr-[2px] pt-px text-[#d6d9de]">
        <Group gap="mr-[2px]">
          <Stat label="모형 공간" width="w-[27px]"><span className="text-[13px] font-medium text-white">모형</span></Stat>
        </Group>
        <Group gap="mr-[3px]">
          <Stat label="그리드" width="w-6" on>
            <Icon><path d="M4 0v16M8.500 0v16M13 0v16M0 4h16M0 8.500h16M0 13h16" strokeWidth="1.200" /></Icon>
          </Stat>
          <Stat label="스냅" width="w-6">
            <Icon><path d="M2 3h13M2 8.500h13M2 14h13" strokeWidth="2" strokeDasharray="2 3" /></Icon>
          </Stat>
          <Stat label="스냅 메뉴" width="w-4"><Caret /></Stat>
        </Group>
        <Group gap="mr-[3px]">
          <Stat label="직교" width="w-6" on>
            <Icon><path d="M1.500 0v14.500H16M2 9.500h4.500V14" strokeWidth="1.500" /></Icon>
          </Stat>
          <Stat label="극좌표" width="w-6">
            <Icon><circle cx="7" cy="9" r="6" strokeWidth="1.200" /><path d="M7 9h9M7 9l6-7M7 3v2" strokeWidth="1.200" /></Icon>
          </Stat>
          <Stat label="극좌표 메뉴" width="w-4"><Caret /></Stat>
          <Stat label="등각투영" width="w-[22px]">
            <Icon><path d="M8 0v16" stroke="#47c75f" strokeWidth="1.300" /><path d="M2 1l12 14" stroke="#e06060" strokeWidth="1.300" /><path d="M7 7h2.500v2.500H7z" fill="#3b4453" /></Icon>
          </Stat>
          <Stat label="등각투영 메뉴" width="w-[19px]"><Caret /></Stat>
        </Group>
        <Group gap="mr-px">
          <Stat label="객체 스냅 추적" width="w-[23px]">
            <Icon><path d="M12 2 2 13.500h14" strokeWidth="1.400" /><path d="M6 7h3v3H6z" fill="currentColor" stroke="none" /></Icon>
          </Stat>
          <Stat label="객체 스냅" width="w-6" on>
            <Icon><path d="M3 6v9.500h12V3H6M.7.700h4.500v4.500H.7z" strokeWidth="1.400" /></Icon>
          </Stat>
          <Stat label="객체 스냅 메뉴" width="w-4"><Caret /></Stat>
        </Group>
        <Group gap="mr-[3px]">
          <Stat label="주석 가시성" width="w-6" on>
            <Icon><path d={PERSON} fill="currentColor" strokeWidth=".8" /><circle cx="13.300" cy="3" r="2.200" /></Icon>
          </Stat>
          <Stat label="자동 축척" width="w-6">
            <Icon><path d={PERSON} fill="currentColor" strokeWidth=".8" /><path d="M14 0l-3 4h2l-1 3 4-4h-2l1-3z" fill="currentColor" stroke="none" /></Icon>
          </Stat>
          <Stat label="주석 축척" width="w-6">
            <Icon><path d={PERSON} fill="currentColor" strokeWidth=".8" /></Icon>
          </Stat>
          <Stat label="축척" width="w-5"><span className="text-xs">1:1</span></Stat>
          <Stat label="축척 메뉴" width="w-[14px]"><Caret /></Stat>
        </Group>
        <Group gap="mr-px">
          <Stat label="작업공간" width="w-6">
            <Icon><circle cx="8" cy="8" r="4" strokeWidth="3" /><circle cx="8" cy="8" r="6.500" strokeWidth="2.500" strokeDasharray="2.600 2.500" /></Icon>
          </Stat>
          <Stat label="작업공간 메뉴" width="w-4"><Caret /></Stat>
        </Group>
        <Group gap="mr-[3px]">
          <Stat label="주석 모니터" width="w-6">
            <Icon><path d="M8 0v16M0 8h16" strokeWidth="2" /></Icon>
          </Stat>
        </Group>
        <Group gap="mr-[3px]">
          <Stat label="객체 분리" width="w-6">
            <Icon><path d="M.7.700h6v6h-6zM6 15.300l3-5 3 5z" strokeWidth="1.300" /><circle cx="12.800" cy="7" r="2.500" strokeWidth="1.300" /></Icon>
          </Stat>
        </Group>
        <Group gap="mr-2">
          <Stat label="하드웨어 가속" width="w-6">
            <Icon>
              <path d="M0 1h7v7H0z" fill="#e8e8e8" stroke="none" /><path d="M3 0v9M0 4h9" stroke={BLUE} /><path d="M7 2h6v6H7z" fill="#4a8ec9" stroke="none" />
              <path d="M0 9h6v5H0z" fill="#f3b23f" stroke="none" /><path d="M6 11l3 3 6-7" stroke="#48b04f" strokeWidth="2.500" />
            </Icon>
          </Stat>
          <Stat label="시스템 상태" width="w-6">
            <Icon>
              <path d="M0 1h15v12H0z" fill="#cfd3d8" stroke="none" /><path d="M0 11l5-7 4 5 3-4 3 3" stroke="#5f6671" strokeWidth="1.500" />
              <path d="M8 16l3.500-7L16 16z" fill="#e5834b" stroke="#fff" strokeWidth=".7" />
            </Icon>
          </Stat>
        </Group>
        <Group gap="mr-0">
          <Stat label="화면 정리" width="w-[18px]">
            <Icon><path d="M.7 2.700h14.600v11H.7zM9 7l3-2M12 8V5H9.500M7 9l-3 2.500M4 8.500v3h3" strokeWidth="1.200" /></Icon>
          </Stat>
          <Stat label="사용자화" width="w-[26px]">
            <Icon><path d="M0 2h16M0 8h16M0 14h16" strokeWidth="2" /></Icon>
          </Stat>
        </Group>
      </div>
    </footer>
  );
}

/* ---------- Windows taskbar ---------- */

function TaskButton({ label, line = false, active = false, children }: { label: string; line?: boolean; active?: boolean; children: ReactNode }) {
  return (
    <button
      type="button"
      aria-label={label}
      className={`relative flex h-10 w-[49px] items-center justify-center ${active ? "border-r-4 border-[#3d5360] bg-[#4c626d]" : ""}`}
    >
      {children}
      {line && <span className={`absolute bottom-0 h-[2px] bg-[#79b8ee] ${active ? "inset-x-0" : "inset-x-1"}`} />}
    </button>
  );
}

function Taskbar() {
  return (
    <div className="flex h-10 shrink-0 items-center bg-linear-to-r from-[#20363d] via-[#21353f] via-60% to-[#1a2543] text-white">
      <button type="button" aria-label="시작" className="flex h-10 w-12 items-center justify-center">
        <Icon><path d="M0 2.300 7 1.300v6.200H0zM8 1.100 16 0v7.500H8zM0 8.500h7v6.200L0 13.700zM8 8.500h8V16l-8-1.100z" fill="#fff" stroke="none" /></Icon>
      </button>
      <label className="flex h-10 w-[344px] items-center gap-3 border border-[#bdbdbd] bg-[#f1f1f1] pl-[11px] text-black">
        <Icon className="size-[17px]" box="0 0 17 17"><circle cx="10.500" cy="6.500" r="5.500" strokeWidth="1.400" /><path d="M6.500 10.500 .7 16.300" strokeWidth="1.400" /></Icon>
        <input aria-label="검색" placeholder="검색하려면 여기에 입력하십시오." className="min-w-0 flex-1 bg-transparent text-base placeholder:text-[#333]" />
      </label>
      <div className="flex">
        <TaskButton label="Cortana"><Icon className="size-[15px]"><circle cx="8" cy="8" r="6.800" strokeWidth="2.200" /></Icon></TaskButton>
        <TaskButton label="작업 보기">
          <Icon><path d="M1 0v3h9V0M1 16v-3h9v3M1 5.500h9v5H1zM14 0v4M14 9v7" strokeWidth="1.300" /><path d="M12.500 5h3v3h-3z" fill="#fff" stroke="none" /></Icon>
        </TaskButton>
        <TaskButton label="Edge">
          <Icon className="size-[22px]" box="0 0 22 22">
            <path d="M1 10C2 4 6 0 11.500 0 18 0 21 5 21 10v3H8c0 3 3 5 6 5 2 0 4-.5 6-1.500v4c-2 1-4 1.500-7 1.500-6 0-9-4-9-8 0-3 1.500-6 4-7.500C4.500 7 2.500 8 1 10zM8 9h7c0-2.500-1.500-4-3.500-4S8 6.500 8 9z" fill="#0b7ae0" stroke="none" />
          </Icon>
        </TaskButton>
        <TaskButton label="파일 탐색기" line>
          <Icon className="size-[22px]" box="0 0 22 22">
            <path d="M1 2h8v4H1z" fill="#d8961c" stroke="none" /><path d="M1 4h20v15H1z" fill="#fbd775" stroke="none" /><path d="M4 20v-8h13v8h-4v-4H8v4z" fill="#3d8fd2" stroke="none" />
          </Icon>
        </TaskButton>
        <TaskButton label="Microsoft Store">
          <Icon className="size-[24px]" box="0 0 24 24">
            <path d="M7 7c0-8 9-8 9 0" stroke="#ddd" strokeWidth="1.500" /><path d="M1 6h22v16l-2 1H3l-2-1z" fill="#fff" stroke="none" />
            <path d="M7 9h4.500v5H7z" fill="#f25022" stroke="none" /><path d="M12.500 9H17v5h-4.500z" fill="#7fba00" stroke="none" /><path d="M7 15h4.500v5H7z" fill="#00a4ef" stroke="none" /><path d="M12.500 15H17v5h-4.500z" fill="#ffb900" stroke="none" />
          </Icon>
        </TaskButton>
        <TaskButton label="메일">
          <Icon className="size-[24px]" box="0 0 24 24">
            <path d="M0 9 12 1l12 8v3H0z" fill="#0f6cbd" stroke="none" /><path d="M2 9h20v6H2z" fill="#e8f2fa" stroke="none" /><path d="M0 9v14h24z" fill="#1a9df0" stroke="none" /><path d="M24 9v14H0z" fill="#3cb8f7" stroke="none" />
          </Icon>
        </TaskButton>
        <TaskButton label="Internet Explorer">
          <Icon className="size-[24px]" box="0 0 24 24">
            <circle cx="12" cy="13" r="7.500" stroke="#58c5f2" strokeWidth="4.500" /><path d="M6 13h14" stroke="#58c5f2" strokeWidth="3.500" /><path d="M16 16h7v3h-8z" fill="#21353f" stroke="none" />
            <path d="M3 22C-2 20 5 7 14 3c7-3 9 0 7 4" stroke="#f5cf2e" strokeWidth="2" />
          </Icon>
        </TaskButton>
        <TaskButton label="Chrome" line>
          <Icon className="size-[22px]" box="0 0 22 22">
            <circle cx="11" cy="11" r="11" fill="#34a853" stroke="none" /><path d="M1.500 5.500A11 11 0 0 1 20.500 5.500H11L6 13z" fill="#ea4335" stroke="none" />
            <path d="M20.500 5.500A11 11 0 0 1 11 22l5-8-5-8.500z" fill="#fbbc05" stroke="none" /><circle cx="11" cy="11" r="5" fill="#fff" stroke="none" /><circle cx="11" cy="11" r="4" fill="#4285f4" stroke="none" />
          </Icon>
        </TaskButton>
        <TaskButton label="AutoCAD 2021" line active>
          <span className="flex size-6 items-center justify-center bg-[#f8e4de]">
            <Icon className="h-[18px] w-[17px]" box="0 0 24 28">
              <path d="M0 28 8 0h7l9 28h-7l-2-6H9l-2 6z" fill="#c4262b" stroke="none" /><path d="M11.500 8l3 9H9z" fill="#f8e4de" stroke="none" /><path d="M9 22l8-1 1 4-11 1z" fill="#7e1215" stroke="none" />
            </Icon>
          </span>
        </TaskButton>
      </div>
      <div className="ml-auto flex h-full items-center pr-1">
        <button type="button" aria-label="숨겨진 아이콘 표시" className="mr-[10px]">
          <Icon className="size-[13px]"><path d="M1 12l7-7 7 7" strokeWidth="1.800" /></Icon>
        </button>
        <Icon className="mr-2 size-4"><path d="M5 3.500h10.500v8H3V8M9 12v3M5 15h8M.7 2.500h4v4h-4zM2.700 7v4" strokeWidth="1.200" /></Icon>
        <Icon className="mr-2 size-[15px]"><path d="M1 5.500h3l4-4v13l-4-4H1zM10.500 5.500l5 5M15.500 5.500l-5 5" strokeWidth="1.200" /></Icon>
        <span className="mr-3 text-lg">A</span>
        <time className="w-[68px] text-center text-xs leading-[19px]">
          오전 6:30
          <br />
          2020-07-22
        </time>
        <button type="button" aria-label="알림" className="relative ml-[18px] mr-3 h-[26px] w-[25px]">
          <Icon className="absolute left-0 top-0 h-[17px] w-4" box="0 0 16 17"><path d="M0 0h16v12H8v5l-5-5H0z" fill="#fff" stroke="none" /><path d="M3 3.500h10M3 6h10M3 8.500h10" stroke="#1a2543" /></Icon>
          <span className="absolute bottom-0 right-0 flex size-4 items-center justify-center rounded-full border border-[#8d929b] bg-[#333a45] text-[11px] font-bold">2</span>
        </button>
        <span className="h-full w-px bg-[#6b7280]" />
      </div>
    </div>
  );
}

export default function App() {
  return (
    <div className="flex h-screen min-h-[700px] w-full flex-col overflow-hidden bg-[#eceef0] font-['Noto_Sans','Noto_Sans_CJK_KR',sans-serif]">
      <div className="flex min-h-0 flex-1 pl-[2px] pr-1 pt-[2px]">
        <main className="flex min-w-0 flex-1 flex-col border border-[#0f8fd0] bg-[#222933]">
          <Header />
          <div className="flex min-h-0 flex-1 flex-col px-[3px]">
            <FileTabs />
            <StyleBars />
            <div className="relative min-h-0 flex-1 bg-[#222930]">
              <Drawing />
              <DimensionBar />
              <button type="button" className="absolute left-[3px] top-[5px] w-[92px] overflow-hidden whitespace-nowrap text-left text-xs leading-[18px] text-[#e6e6e6]">
                [−][평면도][2D 오
              </button>
              <ViewCube />
              <NavBar />
              <CommandWindow />
            </div>
            <StatusBar />
          </div>
        </main>
      </div>
      <Taskbar />
    </div>
  );
}
